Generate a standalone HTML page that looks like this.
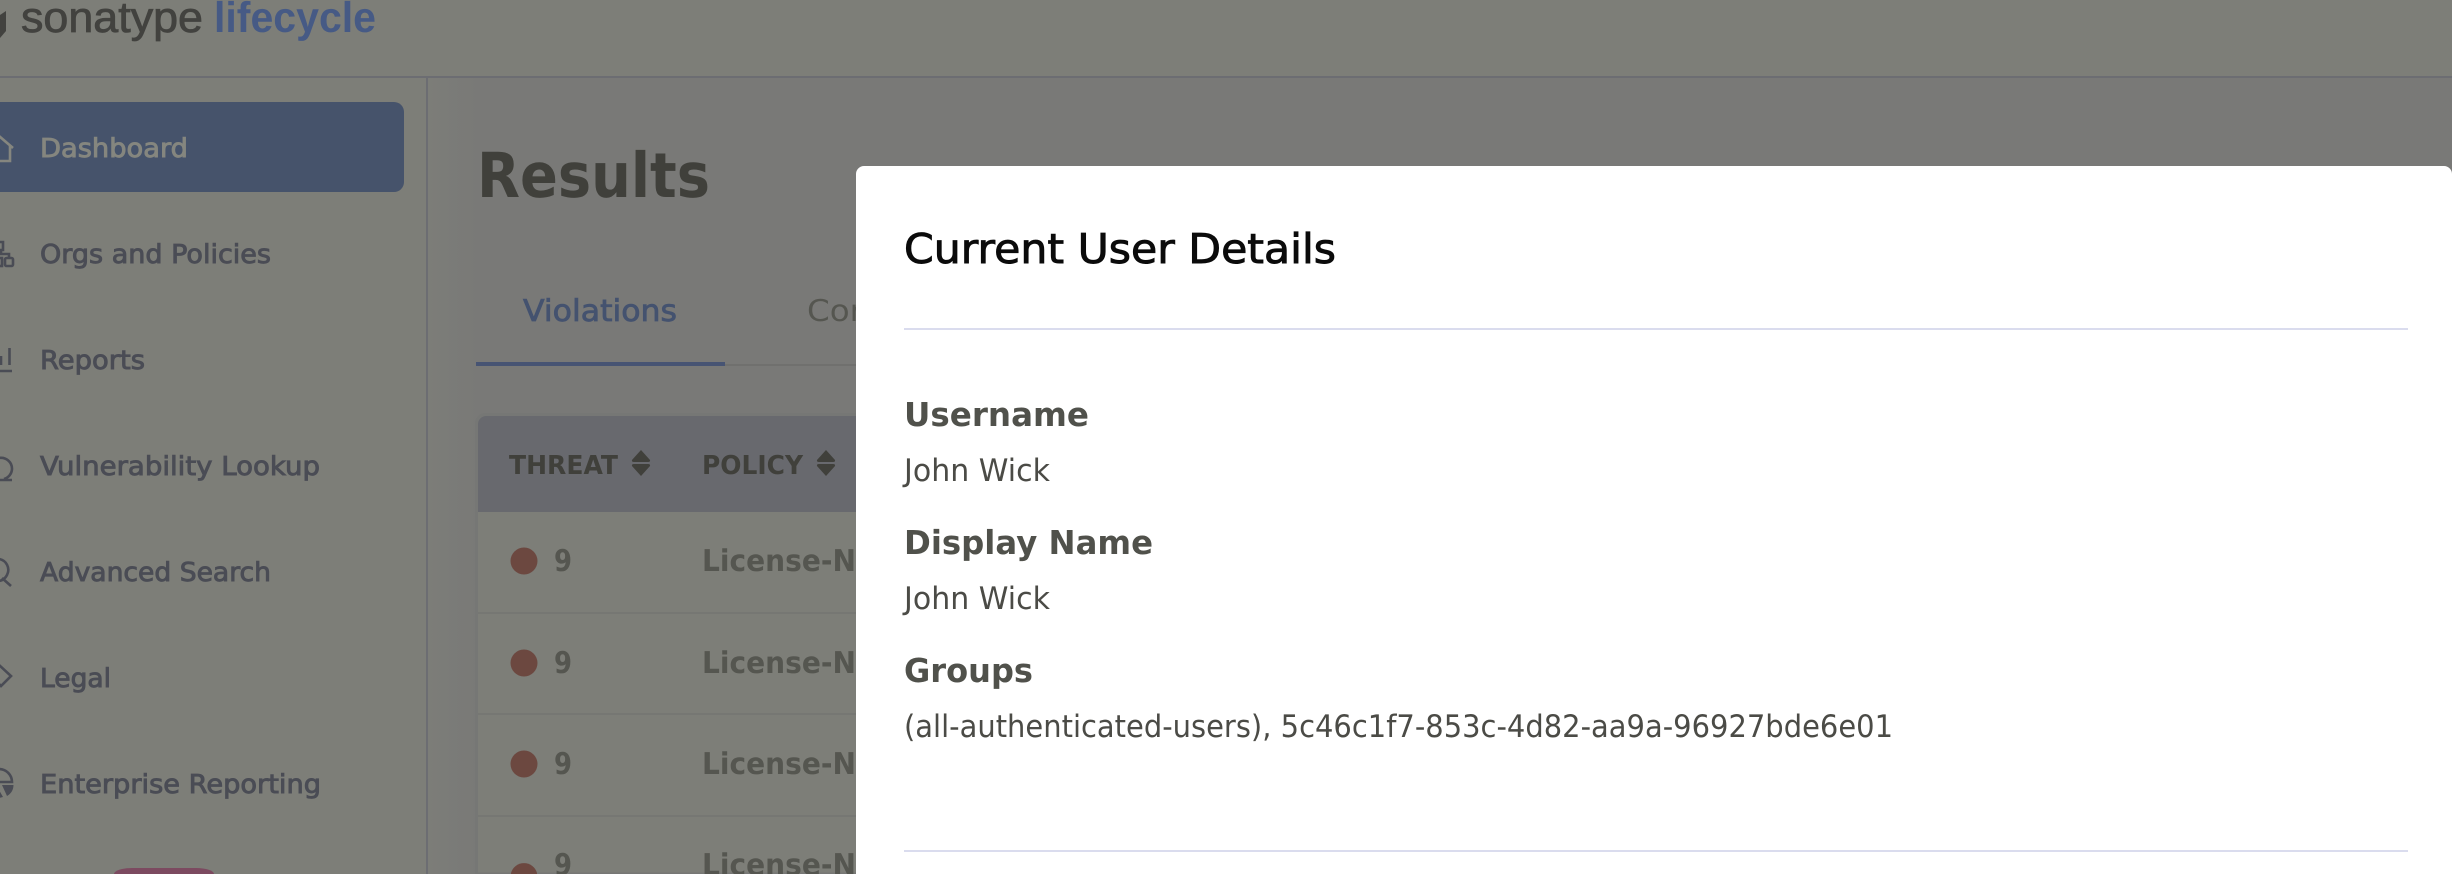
<!DOCTYPE html>
<html lang="en"><head><meta charset="utf-8"><title>Current User Details</title>
<style>
html,body{margin:0;padding:0;width:2452px;height:874px;overflow:hidden;background:#797977}
svg{display:block;overflow:hidden}
text{font-family:"DejaVu Sans","Liberation Sans",sans-serif;text-rendering:geometricPrecision}
.nav{font-size:26px;fill:#4a4c55;stroke:#4a4c55;stroke-width:.9}
.b{font-weight:700}
.lbl{font-size:33px;font-weight:700;fill:#50514b}
.val{font-size:31px;fill:#4b4b46}
.th{font-size:26px;font-weight:700;fill:#40403b}
.td{font-size:30px;font-weight:700;fill:#555650}
</style></head><body>
<svg width="2452" height="874" viewBox="0 0 2452 874" xmlns="http://www.w3.org/2000/svg">
<defs><linearGradient id="g" x1="0" x2="1" y1="0" y2="0"><stop offset="0" stop-color="#7c7d78"/><stop offset="1" stop-color="#797977"/></linearGradient>
<clipPath id="c"><rect x="0" y="0" width="856" height="874"/></clipPath></defs>
<rect width="2452" height="874" fill="#797977"/>
<rect x="0" y="0" width="2452" height="77" fill="#7d7e78"/>
<rect x="0" y="78" width="427" height="796" fill="#7d7e78"/>
<rect x="428" y="78" width="50" height="796" fill="url(#g)"/>
<rect x="0" y="76" width="2452" height="2" fill="#6c6d72"/>
<rect x="426" y="78" width="2" height="796" fill="#6c6d72"/>

<!-- logo -->
<path d="M0 15 L6 11 V31 L0 38 Z" fill="#42423f"/>
<text x="21" y="32" font-size="43" style="font-family:'Liberation Sans',sans-serif" fill="#42423f" stroke="#42423f" stroke-width=".8" textLength="182" lengthAdjust="spacingAndGlyphs">sonatype</text>
<text x="214" y="32" font-size="43" font-weight="700" style="font-family:'Liberation Sans',sans-serif" fill="#465a85" textLength="162" lengthAdjust="spacingAndGlyphs">lifecycle</text>

<!-- sidebar -->
<rect x="-12" y="102" width="416" height="90" rx="10" fill="#46536b"/>
<g fill="none" stroke="#85867f" stroke-width="2.6"><path d="M-1 136 L13 148"/><path d="M10 146 V161 H-1"/></g>
<text x="40" y="157" font-size="26" fill="#85867f" stroke="#85867f" stroke-width=".9" textLength="148" lengthAdjust="spacingAndGlyphs">Dashboard</text>

<g fill="none" stroke="#4a4c55" stroke-width="2.6">
<path d="M-1 242 H3 V250 H-1"/><path d="M1 250 V254 H9 V258"/><rect x="5" y="258" width="8" height="8" rx="1.5"/><rect x="-6" y="258" width="8" height="8"/>
<path d="M1 356 V365 M9.5 348 V365 M-1 371 H12"/>
<path d="M-1 458 A11 11 0 0 1 12 469 A11 11 0 0 1 4 479 M-1 480 H12"/>
<path d="M-1 559 A11 11 0 0 1 7 575 A11 11 0 0 1 -1 581"/><path d="M2 578 L11 586"/>
<path d="M-1 665 L11 676 L1 686 L-1 684"/>
<path d="M-1 769 A13 13 0 0 1 12 782 H-1"/>
</g>
<path d="M2 785 H13.5 A13 13 0 0 1 7 796 Z M-1 790 L3 797 L-1 798 Z" fill="#4a4c55"/>

<text class="nav" x="40" y="263" textLength="231" lengthAdjust="spacingAndGlyphs">Orgs and Policies</text>
<text class="nav" x="40" y="369" textLength="105" lengthAdjust="spacingAndGlyphs">Reports</text>
<text class="nav" x="40" y="475" textLength="280" lengthAdjust="spacingAndGlyphs">Vulnerability Lookup</text>
<text class="nav" x="40" y="581" textLength="231" lengthAdjust="spacingAndGlyphs">Advanced Search</text>
<text class="nav" x="40" y="687" textLength="71" lengthAdjust="spacingAndGlyphs">Legal</text>
<text class="nav" x="40" y="793" textLength="281" lengthAdjust="spacingAndGlyphs">Enterprise Reporting</text>
<path d="M114 874 A18 6 0 0 1 132 868 H196 A18 6 0 0 1 214 874 Z" fill="#7c4a60"/>

<!-- main -->
<text class="b" x="477" y="197" font-size="62" fill="#40403b" textLength="233" lengthAdjust="spacingAndGlyphs">Results</text>
<rect x="476" y="364" width="380" height="2" fill="#70706e"/>
<text x="523" y="321" font-size="30" fill="#44526f" stroke="#44526f" stroke-width=".8" textLength="154" lengthAdjust="spacingAndGlyphs">Violations</text>
<rect x="476" y="362" width="249" height="4" fill="#475473"/>
<g clip-path="url(#c)">
<text x="807" y="321" font-size="30" fill="#555650" textLength="56" lengthAdjust="spacingAndGlyphs">Cor</text>
<path d="M476.500 874 V424 A9 9 0 0 1 485.500 414.500 H860 V874 Z" fill="#7d7e78" stroke="#767775" stroke-width="3"/>
<path d="M478 512 V424 A8 8 0 0 1 486 416 H860 V512 Z" fill="#68696e"/>
<text class="th" x="509" y="474" textLength="109" lengthAdjust="spacingAndGlyphs">THREAT</text>
<path d="M641 450 L650 460 Q650.500 462 648 462 H634 Q631.500 462 632 460 Z M641 476 L650 466 Q650.500 464 648 464 H634 Q631.500 464 632 466 Z" fill="#40403b"/>
<text class="th" x="702" y="474" textLength="101" lengthAdjust="spacingAndGlyphs">POLICY</text>
<path d="M826 450 L835 460 Q835.500 462 833 462 H819 Q816.500 462 817 460 Z M826 476 L835 466 Q835.500 464 833 464 H819 Q816.500 464 817 466 Z" fill="#40403b"/>
<rect x="478" y="612" width="380" height="2" fill="#767773"/>
<rect x="478" y="713" width="380" height="2" fill="#767773"/>
<rect x="478" y="815" width="380" height="2" fill="#767773"/>
<g fill="#6c4840"><circle cx="524" cy="561" r="13.500"/><circle cx="524" cy="663" r="13.500"/><circle cx="524" cy="764" r="13.500"/></g>
<path d="M511 873 A13.500 13.500 0 0 1 537 873 V874 H511 Z" fill="#6c4840"/>
<text class="td" x="554" y="571" textLength="18" lengthAdjust="spacingAndGlyphs">9</text>
<text class="td" x="554" y="673" textLength="18" lengthAdjust="spacingAndGlyphs">9</text>
<text class="td" x="554" y="774" textLength="18" lengthAdjust="spacingAndGlyphs">9</text>
<text class="td" x="554" y="875" textLength="18" lengthAdjust="spacingAndGlyphs">9</text>
<text class="td" x="702" y="571" textLength="154" lengthAdjust="spacingAndGlyphs">License-N</text>
<text class="td" x="702" y="673" textLength="154" lengthAdjust="spacingAndGlyphs">License-N</text>
<text class="td" x="702" y="774" textLength="154" lengthAdjust="spacingAndGlyphs">License-N</text>
<text class="td" x="702" y="875" textLength="154" lengthAdjust="spacingAndGlyphs">License-N</text>
</g>

<!-- modal -->
<path d="M856 874 V174 A8 8 0 0 1 864 166 H2444 A8 8 0 0 1 2452 174 V874 Z" fill="#fff"/>
<text x="904" y="263" font-size="41" fill="#0b0b0b" stroke="#0b0b0b" stroke-width=".9" textLength="432" lengthAdjust="spacingAndGlyphs">Current User Details</text>
<rect x="904" y="328" width="1504" height="2" fill="#dadcee"/>
<text class="lbl" x="904" y="426" textLength="185" lengthAdjust="spacingAndGlyphs">Username</text>
<text class="val" x="904" y="481" textLength="146" lengthAdjust="spacingAndGlyphs">John Wick</text>
<text class="lbl" x="904" y="554" textLength="249" lengthAdjust="spacingAndGlyphs">Display Name</text>
<text class="val" x="904" y="609" textLength="146" lengthAdjust="spacingAndGlyphs">John Wick</text>
<text class="lbl" x="904" y="682" textLength="129" lengthAdjust="spacingAndGlyphs">Groups</text>
<text class="val" x="904" y="737" textLength="989" lengthAdjust="spacingAndGlyphs">(all-authenticated-users), 5c46c1f7-853c-4d82-aa9a-96927bde6e01</text>
<rect x="904" y="850" width="1504" height="2" fill="#dadcee"/>
</svg>
</body></html>
